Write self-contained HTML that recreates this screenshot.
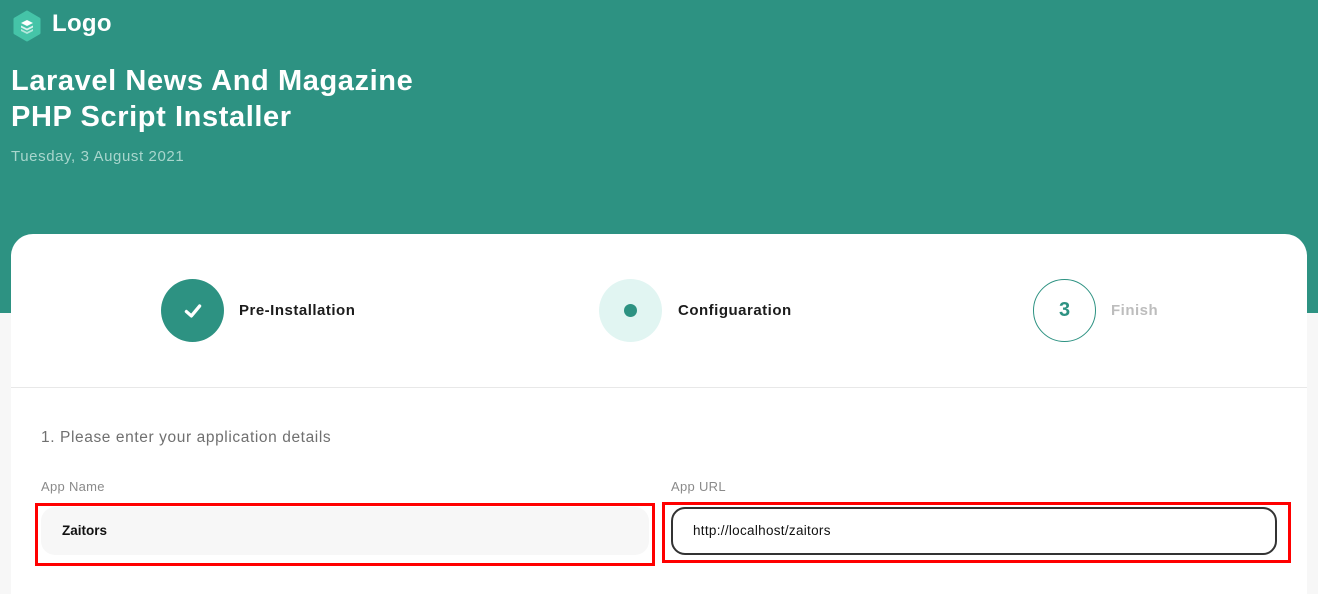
<!DOCTYPE html>
<html><head><meta charset="utf-8"><style>
*{margin:0;padding:0;box-sizing:border-box}
body{width:1318px;height:584px;overflow:hidden;background:#f7f7f7;font-family:"Liberation Sans",sans-serif;position:relative}
.hdr{position:absolute;left:0;top:0;width:1318px;height:313px;background:#2d9282}
.abs{position:absolute;white-space:nowrap}
.card{position:absolute;left:11px;top:234px;width:1296px;height:360px;background:#fff;border-radius:22px 22px 0 0}
.circ{position:absolute;width:63px;height:63px;border-radius:50%;top:279px}
.lbl{position:absolute;top:302px;font-size:15px;font-weight:bold;color:#1c1c1c;letter-spacing:0.5px}
.red{position:absolute;border:3px solid #f00}
</style></head><body>
<div class="hdr"></div>
<svg class="abs" style="left:12px;top:10px" width="30" height="32" viewBox="0 0 30 32">
<path d="M15 2 L27 9 V23 L15 30 L3 23 V9 Z" fill="#45c4a8" stroke="#45c4a8" stroke-width="3" stroke-linejoin="round"/>
<path d="M15 10 L21 13 L15 16 L9 13 Z" fill="#fff"/>
<path d="M9 15.5 L15 18.5 L21 15.5 V17.5 L15 20.5 L9 17.5Z" fill="#fff" opacity=".8"/>
<path d="M9 19 L15 22 L21 19 V21 L15 24 L9 21Z" fill="#fff" opacity=".6"/>
</svg>
<div class="abs" style="left:52px;top:10px;font-size:24px;color:#fff;font-weight:bold;letter-spacing:0.3px">Logo</div>
<div class="abs" style="left:11px;top:63px;font-size:29px;line-height:36px;font-weight:bold;color:#fff;letter-spacing:0.6px">Laravel News And Magazine<br>PHP Script Installer</div>
<div class="abs" style="left:11px;top:148px;font-size:15px;color:#a8d6cd;letter-spacing:0.6px">Tuesday, 3 August 2021</div>
<div class="card"></div>
<div class="circ" style="left:161px;background:#2d9282"></div>
<svg class="abs" style="left:182px;top:300px" width="22" height="22" viewBox="0 0 20 20"><path d="M4 10.5 L8.5 14.5 L16 5.5" fill="none" stroke="#fff" stroke-width="3" stroke-linecap="round" stroke-linejoin="round"/></svg>
<div class="lbl" style="left:239px">Pre-Installation</div>
<div class="circ" style="left:599px;background:#e1f5f2"></div>
<div class="abs" style="left:624px;top:304px;width:13px;height:13px;border-radius:50%;background:#2d9282"></div>
<div class="lbl" style="left:678px">Configuaration</div>
<div class="circ" style="left:1033px;border:1px solid #2d9282;color:#2d9282;font-size:20px;font-weight:bold;text-align:center;line-height:61px">3</div>
<div class="lbl" style="left:1111px;color:#bdbdbd">Finish</div>
<div class="abs" style="left:11px;top:387px;width:1296px;height:1px;background:#e8e8e8"></div>
<div class="abs" style="left:41px;top:429px;font-size:15.5px;color:#707070;letter-spacing:0.6px">1. Please enter your application details</div>
<div class="abs" style="left:41px;top:479px;font-size:13px;color:#8a8a8a;letter-spacing:0.3px">App Name</div>
<div class="abs" style="left:671px;top:479px;font-size:13px;color:#8a8a8a;letter-spacing:0.3px">App URL</div>
<div class="abs" style="left:41px;top:507px;width:608px;height:48px;background:#f7f7f7;border-radius:14px;padding-left:21px;line-height:48px;font-size:13.5px;font-weight:bold;color:#111">Zaitors</div>
<div class="abs" style="left:671px;top:507px;width:606px;height:48px;border:2px solid #333;border-radius:14px;padding-left:20px;line-height:44px;font-size:13.5px;color:#111;letter-spacing:0.3px">http://localhost/zaitors</div>
<div class="red" style="left:35px;top:503px;width:620px;height:63px"></div>
<div class="red" style="left:662px;top:502px;width:629px;height:61px"></div>
</body></html>
